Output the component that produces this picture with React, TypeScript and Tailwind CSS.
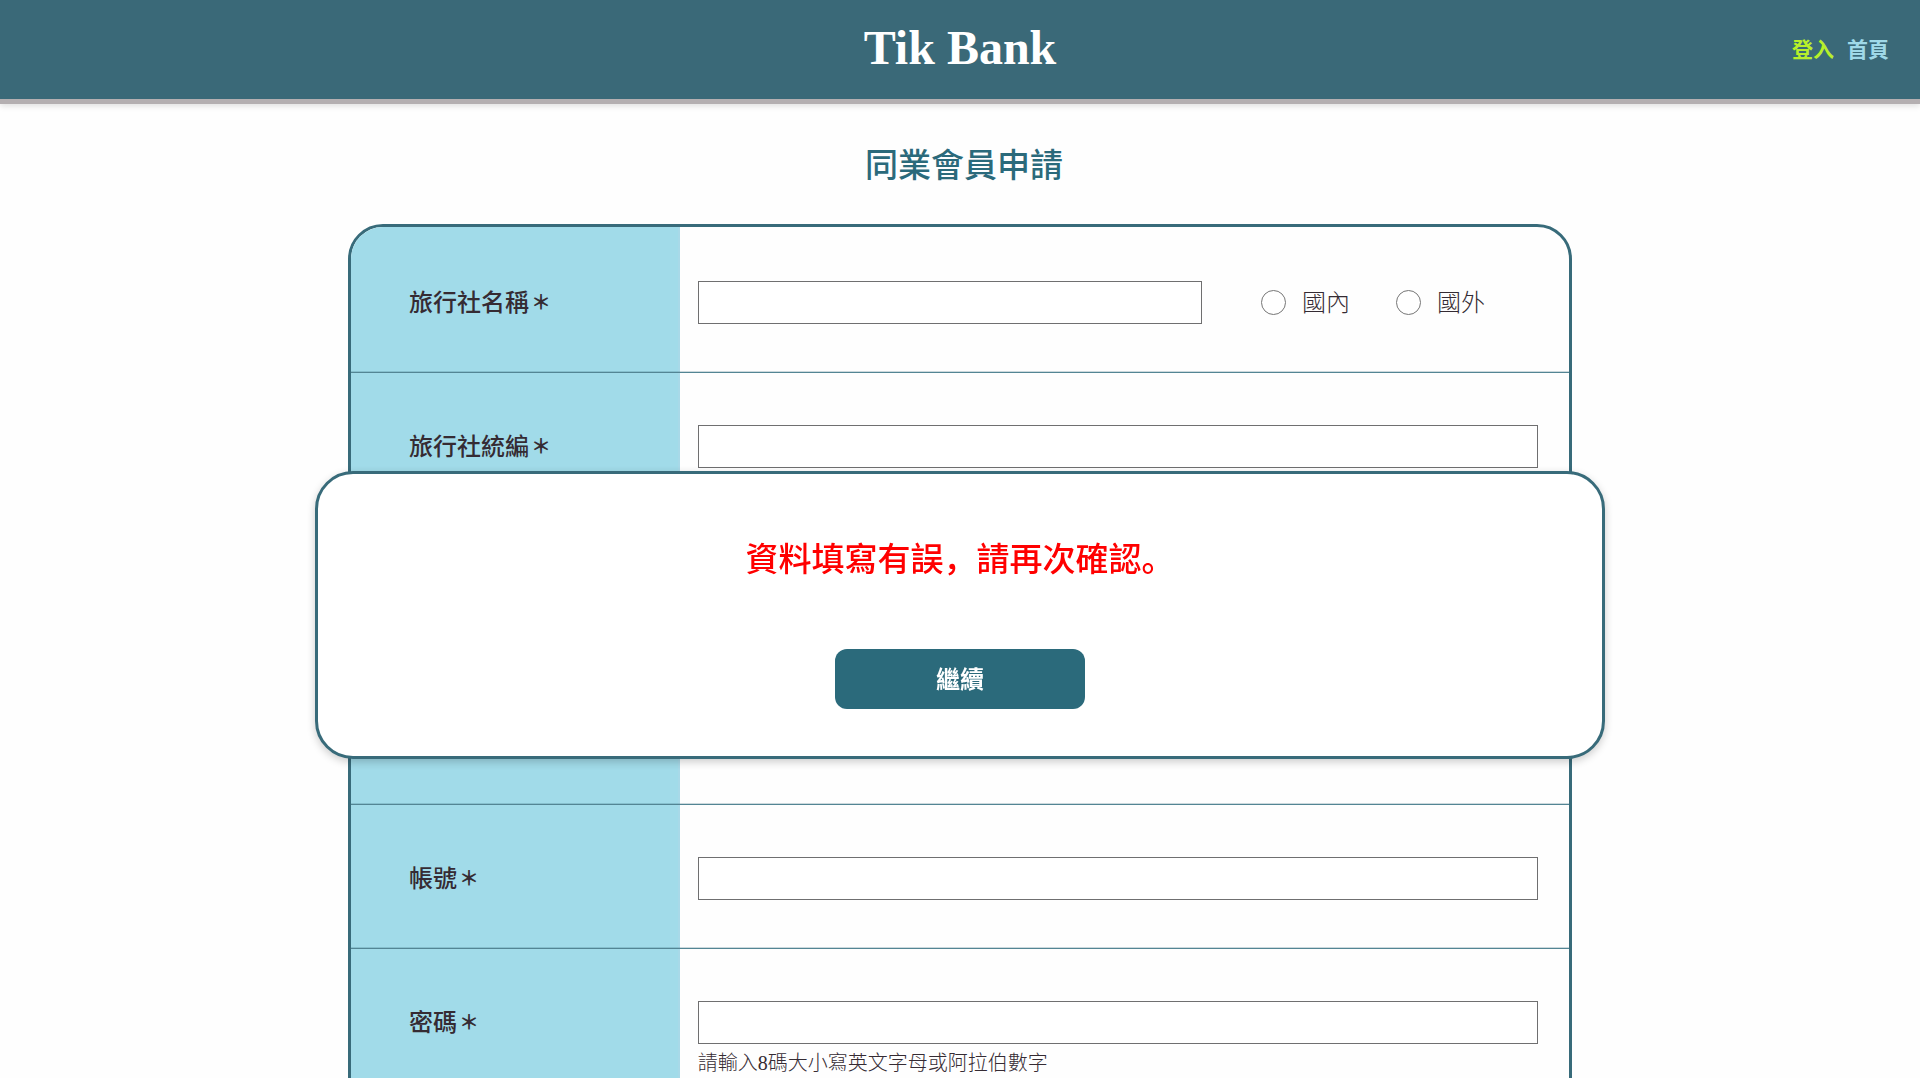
import type { ReactNode } from "react";

const inputClass =
  "block h-[43px] rounded-none border border-[#6f6f70] bg-white px-3 text-xl outline-none focus:border-[#2b6a7b]";

type RowProps = {
  id: string;
  label: string;
  first?: boolean;
  children: ReactNode;
};

function Row({ id, label, first = false, children }: RowProps) {
  return (
    <div
      className={
        first
          ? "grid grid-cols-[27%_1fr]"
          : "relative grid grid-cols-[27%_1fr] border-t border-[#538594] shadow-[0_-1px_0_#386b7a40]"
      }
    >
      <div
        className={
          first
            ? "border-r-2 border-[#a8d9e8] bg-[#a1dbe9] pt-[54px] pb-12 pl-[58px]"
            : "border-r-2 border-[#a8d9e8] bg-[#a1dbe9] pt-[52px] pb-12 pl-[58px]"
        }
      >
        <label htmlFor={id} className="flex h-[43px] items-center text-2xl font-medium">
          {label}
          <span className="w-6 text-center text-xl font-bold">＊</span>
        </label>
      </div>
      <div className={first ? "pt-[54px] pr-[31px] pb-12 pl-[18px]" : "pt-[52px] pr-[31px] pb-12 pl-[18px]"}>
        {children}
      </div>
    </div>
  );
}

function Radio({ label, value }: { label: string; value: string }) {
  return (
    <label className="flex items-center gap-4 text-2xl font-light">
      <input
        type="radio"
        name="region"
        value={value}
        className="size-[25px] appearance-none rounded-full border border-[#767676] bg-white checked:border-8 checked:border-[#2b6a7b]"
      />
      {label}
    </label>
  );
}

function Header() {
  return (
    <header className="grid h-[104px] grid-cols-[1fr_auto_1fr] items-center border-b-[5px] border-[#b4afb1] bg-[#3a6978] shadow-[0_2px_6px_#00000020]">
      <a href="#" className="col-start-2 pb-1 text-5xl leading-none font-bold text-white">
        Tik Bank
      </a>
      <nav className="flex justify-end gap-[13px] pt-0.5 pr-[31px] text-[21px] font-bold">
        <a href="#login" className="text-[#b7ef2b]">登入</a>
        <a href="#home" className="text-[#9fd9e8]">首頁</a>
      </nav>
    </header>
  );
}

function ErrorDialog() {
  return (
    <div
      role="alertdialog"
      aria-modal="true"
      aria-labelledby="dialog-message"
      className="fixed inset-x-0 top-[471px] z-10 mx-auto flex w-[67.2%] flex-col items-center rounded-[38px] border-3 border-[#386b7a] bg-white pt-[62px] pb-[47px] shadow-[0_3px_8px_#00000033]"
    >
      <p id="dialog-message" className="text-[33px] leading-[48px] font-medium text-[#ff0000]">
        資料填寫有誤，請再次確認。
      </p>
      <button
        type="button"
        className="mt-[65px] h-[60px] w-[250px] cursor-pointer rounded-xl bg-[#2b6a7b] pt-0.5 text-2xl font-bold text-white"
      >
        繼續
      </button>
    </div>
  );
}

export default function App() {
  return (
    <div
      lang="zh-Hans"
      className="min-h-screen bg-[#fefefe] font-['Liberation_Serif','Noto_Sans_CJK_SC',sans-serif] text-[#352b33]"
    >
      <Header />
      <main>
        <h1 className="pt-[38px] pl-2 text-center text-[33px] leading-[48px] font-medium text-[#2b6a7b]">
          同業會員申請
        </h1>
        <form className="mx-auto mt-[34px] w-[63.75%] overflow-hidden rounded-[35px] border-3 border-[#386b7a]">
          <Row id="agency" label="旅行社名稱" first>
            <div className="flex items-center">
              <input id="agency" type="text" className={`${inputClass} w-[60%]`} />
              <div className="ml-[59px] flex gap-[46px]">
                <Radio label="國內" value="domestic" />
                <Radio label="國外" value="overseas" />
              </div>
            </div>
          </Row>
          <Row id="taxId" label="旅行社統編">
            <input id="taxId" type="text" className={`${inputClass} w-full`} />
          </Row>
          <Row id="contact" label="聯絡人">
            <input id="contact" type="text" className={`${inputClass} w-full`} />
          </Row>
          <Row id="phone" label="聯絡電話">
            <input id="phone" type="tel" className={`${inputClass} w-full`} />
          </Row>
          <Row id="account" label="帳號">
            <input id="account" type="text" className={`${inputClass} w-full`} />
          </Row>
          <Row id="password" label="密碼">
            <input
              id="password"
              type="password"
              aria-describedby="password-hint"
              className={`${inputClass} w-full`}
            />
            <p id="password-hint" className="mt-[5px] text-xl font-light">
              請輸入<span className="font-normal">8</span>碼大小寫英文字母或阿拉伯數字
            </p>
          </Row>
        </form>
      </main>
      <ErrorDialog />
    </div>
  );
}
